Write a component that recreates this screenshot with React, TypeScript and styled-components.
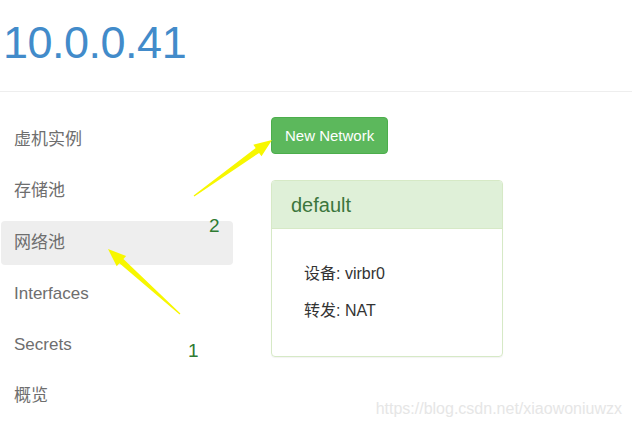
import React from 'react';
import styled, { createGlobalStyle } from 'styled-components';

const GlobalStyle = createGlobalStyle`
  html, body {
    margin: 0;
    padding: 0;
    background: #fff;
  }
  body {
    font-family: 'Liberation Sans', Arial, 'Noto Sans CJK SC', sans-serif;
  }
`;

const navItems = ['虚机实例', '存储池', '网络池', 'Interfaces', 'Secrets', '概览'];

function App() {
  return (
    <Page>
      <GlobalStyle />
      <Header>
        <Title>10.0.0.41</Title>
      </Header>
      <Main>
        <Sidebar>
          {navItems.map((item) => (
            <NavItem key={item} active={item === '网络池'}>
              {item}
            </NavItem>
          ))}
        </Sidebar>
        <Content>
          <GreenButton>New Network</GreenButton>
          <Panel>
            <PanelHeading>default</PanelHeading>
            <PanelBody>
              <InfoLine>设备: virbr0</InfoLine>
              <InfoLine>转发: NAT</InfoLine>
            </PanelBody>
          </Panel>
        </Content>
      </Main>
      <Annotations width="632" height="425" viewBox="0 0 632 425">
        <polygon
          fill="#f7f700"
          points="108,249 126.1,255.9 123.4,258.9 180.4,313.6 179.6,314.4 119.4,263.3 116.7,266.3"
        />
        <polygon
          fill="#f7f700"
          points="272,140 253.3,144.8 255.7,148.1 193.6,195.6 194.4,196.4 259.1,152.9 261.5,156.2"
        />
        <Label x="209" y="232">2</Label>
        <Label x="188" y="357">1</Label>
      </Annotations>
      <Watermark>https://blog.csdn.net/xiaowoniuwzx</Watermark>
    </Page>
  );
}

const Page = styled.div`
  position: relative;
  width: 632px;
  height: 425px;
  overflow: hidden;
`;

const Header = styled.div`
  height: 92px;
  padding-top: 17px;
  box-sizing: border-box;
  border-bottom: 1px solid #eeeeee;
`;

const Title = styled.h1`
  margin: 0 0 0 3px;
  font-size: 45px;
  font-weight: normal;
  letter-spacing: -0.5px;
  line-height: 52px;
  color: #428bca;
`;

const Main = styled.div`
  display: flex;
  padding-left: 1px;
`;

const Sidebar = styled.ul`
  display: flex;
  flex-direction: column;
  gap: 7.3px;
  width: 232px;
  margin: 0;
  padding: 26px 0 0;
  list-style: none;
`;

const NavItem = styled.li<{ active?: boolean }>`
  height: 44px;
  line-height: 44px;
  padding-left: 13px;
  border-radius: 4px;
  font-size: 17px;
  color: #6e6e6e;
  background: ${(p) => (p.active ? '#eeeeee' : 'transparent')};
`;

const Content = styled.div`
  display: flex;
  flex-direction: column;
  align-items: flex-start;
  margin-left: 38px;
  padding-top: 25px;
`;

const GreenButton = styled.button`
  height: 37px;
  padding: 0 13px;
  border: 1px solid #4cae4c;
  border-radius: 4px;
  background: #5cb85c;
  color: #fff;
  font-family: 'Liberation Sans', Arial, sans-serif;
  font-size: 15px;
`;

const Panel = styled.div`
  width: 232px;
  margin-top: 26px;
  border: 1px solid #d6e9c6;
  border-radius: 4px;
  box-sizing: border-box;
  overflow: hidden;
  box-shadow: 0 1px 1px rgba(0, 0, 0, 0.05);
`;

const PanelHeading = styled.div`
  height: 47px;
  line-height: 48px;
  padding-left: 19px;
  background: #dff0d8;
  border-bottom: 1px solid #d6e9c6;
  color: #3c763d;
  font-size: 20px;
`;

const PanelBody = styled.div`
  padding: 26px 0 27px 32px;
`;

const InfoLine = styled.div`
  line-height: 37px;
  font-size: 16px;
  color: #333;
`;

const Annotations = styled.svg`
  position: absolute;
  left: 0;
  top: 0;
  pointer-events: none;
`;

const Label = styled.text`
  font-family: 'Liberation Sans', Arial, sans-serif;
  font-size: 19px;
  fill: #2e7b32;
`;

const Watermark = styled.div`
  position: absolute;
  right: 10px;
  top: 400px;
  font-size: 16px;
  color: #e6e6e6;
`;

export default App;
